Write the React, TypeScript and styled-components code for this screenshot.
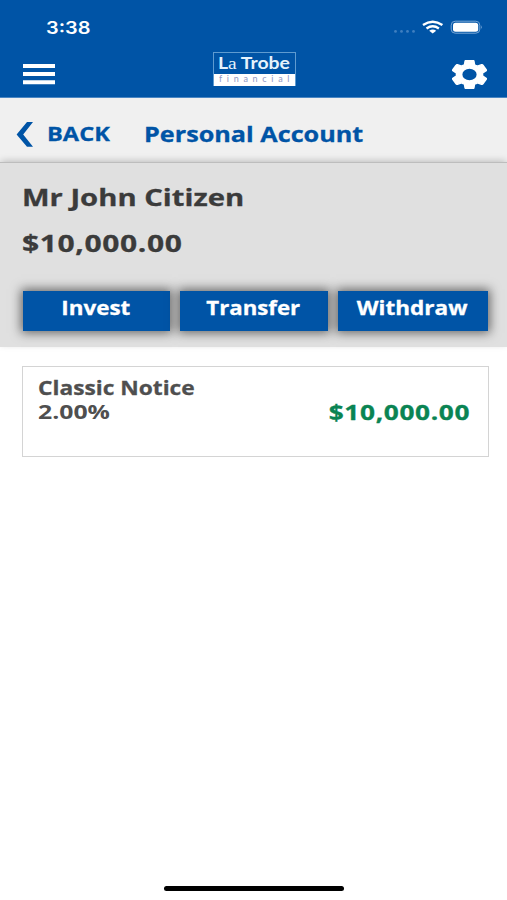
import React from "react";
import styled, { createGlobalStyle } from "styled-components";

const BLUE = "#0054a6";

const GlobalStyle = createGlobalStyle`
  * { box-sizing: border-box; }
  body { margin: 0; background: #fff; font-family: "Open Sans", "Noto Sans", sans-serif; }
`;

const Screen = styled.main`
  display: flex;
  flex-direction: column;
  width: 507px;
  height: 900px;
  background: #fff;
  overflow: hidden;
`;

const Header = styled.header`
  height: 98px;
  background: ${BLUE};
  border-bottom: 1px solid #4a86c3;
  color: #fff;
`;

const StatusBar = styled.div`
  display: flex;
  justify-content: space-between;
  height: 50px;
  padding: 17px 24px 0 46px;
`;

const StatusIcons = styled.div`
  display: flex;
  height: 20px;
`;

/* Wide lettering: glyphs are stretched horizontally from one side. */
const Wide = styled.span<{ $scale: number; $from?: string }>`
  display: inline-block;
  white-space: nowrap;
  transform: scaleX(${(p) => p.$scale});
  transform-origin: ${(p) => p.$from ?? "left"} center;
`;

const Heavy = styled(Wide)`
  -webkit-text-stroke: 0.3px currentColor;
`;

const Clock = styled.div`
  padding-top: 1px;
  font: 600 17px/20px Inter, sans-serif;
`;

const Toolbar = styled.div`
  display: grid;
  grid-template-columns: 190px 83px 1fr;
  height: 47px;
  padding: 0 20px 0 23px;
`;

const IconButton = styled.button<{ $end?: boolean }>`
  display: flex;
  justify-self: ${(p) => (p.$end ? "end" : "start")};
  align-self: center;
  padding: 1px 0 0;
  border: 0;
  background: none;
  color: inherit;
`;

const Logo = styled.div`
  display: flex;
  flex-direction: column;
  width: 83px;
  height: 34px;
  margin-top: 2px;
  border: 1px solid #5f9bd0;
`;

const LogoName = styled.div`
  height: 21px;
  padding-left: 4px;
  color: #e6f2fc;
  font: 700 17px/20px Lato, sans-serif;
`;

const LogoSerif = styled.span`
  font-family: "Liberation Serif", serif;
  font-weight: 400;
`;

const LogoTag = styled.div`
  height: 12px;
  flex: none;
  padding-left: 5px;
  background: #fff;
  color: #8f97c4;
  font: 400 9px/10px Lato, sans-serif;
  letter-spacing: 4.7px;
  white-space: nowrap;
`;

const NavBar = styled.nav`
  display: flex;
  height: 64px;
  padding: 0 16px;
  background: #f0f0f0;
  color: ${BLUE};
`;

const BackLink = styled.div`
  display: flex;
  width: 128px;
  font: 700 20px/30px "Open Sans", sans-serif;

  svg { margin: 23px 13px 0 0; }
  span { margin-top: 21px; }
`;

const Title = styled.h1`
  margin: 20px 0 0;
  font: 700 21px/32px "Open Sans", sans-serif;
`;

const Summary = styled.section`
  height: 185px;
  padding: 16px 19px 0 22px;
  background: #e0e0e0;
  border-top: 1px solid #bdbdbd;
  box-shadow: 0 -2px 7px -1px rgba(0, 0, 0, 0.22);
  color: #3b3b3b;
`;

const Holder = styled.h2`
  margin: 0;
  font: 700 24px/36px "Open Sans", sans-serif;
`;

const Balance = styled.div`
  margin-top: 10px;
  font: 700 24px/36px "Open Sans", sans-serif;
  letter-spacing: 0.5px;
`;

const Actions = styled.div`
  display: grid;
  grid-template-columns: 147px 148px 150px;
  gap: 10px;
  margin: 29.6px 0 0 0.8px;
`;

const ActionButton = styled.button`
  height: 40.5px;
  padding: 0 2px 6px 0;
  border: 0;
  background: ${BLUE};
  box-shadow: 0 0 10px 2px rgba(0, 0, 0, 0.55);
  color: #fff;
  font: 700 20px/34px "Open Sans", sans-serif;
`;

const AccountCard = styled.article`
  display: flex;
  justify-content: space-between;
  height: 91px;
  margin: 19px 18px 0 21.5px;
  padding: 9px 17.5px 0 15.5px;
  border: 1.5px solid #d4d4d4;
  background: #fff;
`;

const Product = styled.div`
  color: #4f4f4f;
  font: 700 20px/24px "Open Sans", sans-serif;
`;

const Amount = styled.div`
  margin-top: 21px;
  color: #0a8453;
  font: 700 21px/30px "Open Sans", sans-serif;
  letter-spacing: 0.5px;
`;

const HomeIndicator = styled.div`
  width: 180px;
  height: 5px;
  margin: auto auto 9px 164px;
  border-radius: 3px;
  background: #000;
`;

const MenuIcon = () => (
  <svg width="32" height="22" viewBox="0 0 32 22">
    <path d="M0 3h32M0 11h32M0 19.2h32" stroke="#fff" strokeWidth="4" />
  </svg>
);

const GearIcon = () => (
  <svg width="35" height="29" viewBox="2.3 2.1 19.4 19.8" preserveAspectRatio="none">
    <path
      fill="#fff"
      stroke="#fff"
      strokeWidth="0.9"
      strokeLinejoin="round"
      d="M19.14 12.94c.04-.3.06-.61.06-.94s-.02-.64-.07-.94l2.03-1.58a.49.49 0 0 0 .12-.61l-1.92-3.32a.49.49 0 0 0-.59-.22l-2.39.96a7 7 0 0 0-1.62-.94l-.36-2.54a.48.48 0 0 0-.48-.41h-3.84a.48.48 0 0 0-.47.41l-.36 2.54c-.59.24-1.13.57-1.62.94l-2.39-.96a.48.48 0 0 0-.59.22L2.74 8.87a.48.48 0 0 0 .12.61l2.03 1.58c-.05.3-.09.63-.09.94s.02.64.07.94l-2.03 1.58a.49.49 0 0 0-.12.61l1.92 3.32c.12.22.37.29.59.22l2.39-.96c.5.38 1.03.7 1.62.94l.36 2.54c.05.24.24.41.48.41h3.84c.24 0 .44-.17.47-.41l.36-2.54a6.7 6.7 0 0 0 1.62-.94l2.39.96c.22.08.47 0 .59-.22l1.92-3.32a.48.48 0 0 0-.12-.61zM12 16.4a4.4 4.4 0 1 1 0-8.8 4.4 4.4 0 0 1 0 8.8z"
    />
  </svg>
);

const SignalIcon = () => (
  <svg width="90" height="20" viewBox="0 0 90 20">
    <g fill="#3f7fc0">
      <circle cx="2.5" cy="14.4" r="1.4" />
      <circle cx="8.5" cy="14.4" r="1.4" />
      <circle cx="14.5" cy="14.4" r="1.4" />
      <circle cx="20.5" cy="14.4" r="1.4" />
    </g>
    <g fill="none" stroke="#fff" strokeWidth="2.4">
      <path d="M30 8q9.7-6.6 19.4 0" />
      <path d="M33.5 11.4q6.2-4.2 12.4 0" />
    </g>
    <path d="M36.2 13.7q3.5-2.4 7 0L39.7 16.6z" fill="#fff" />
    <rect x="58.2" y="4.2" width="28.6" height="12" rx="4" fill="none" stroke="#79a7d7" strokeWidth="1" />
    <rect x="60" y="5.8" width="25.2" height="9" rx="2.5" fill="#fff" />
    <path d="M88.1 8.3q1.8 1.9 0 3.8z" fill="#79a7d7" />
  </svg>
);

const BackIcon = () => (
  <svg width="18" height="27" viewBox="0 0 18 27">
    <path d="M11 1h6L7.2 13.4l9.8 12.4h-6L.6 13.4z" fill={BLUE} />
  </svg>
);

export default function App() {
  return (
    <>
      <GlobalStyle />
      <Screen>
        <Header>
          <StatusBar>
            <Clock><Wide $scale={1.17}>3:38</Wide></Clock>
            <StatusIcons><SignalIcon /></StatusIcons>
          </StatusBar>
          <Toolbar>
            <IconButton aria-label="Menu"><MenuIcon /></IconButton>
            <Logo>
              <LogoName><Wide $scale={1.14}>L<LogoSerif>a</LogoSerif> Trobe</Wide></LogoName>
              <LogoTag>financial</LogoTag>
            </Logo>
            <IconButton $end aria-label="Settings"><GearIcon /></IconButton>
          </Toolbar>
        </Header>
        <NavBar>
          <BackLink>
            <BackIcon />
            <Heavy $scale={1.18}>BACK</Heavy>
          </BackLink>
          <Title><Heavy $scale={1.2}>Personal Account</Heavy></Title>
        </NavBar>
        <Summary>
          <Holder><Heavy $scale={1.218}>Mr John Citizen</Heavy></Holder>
          <Balance><Heavy $scale={1.25}>$10,000.00</Heavy></Balance>
          <Actions>
            <ActionButton><Heavy $scale={1.12} $from="center">Invest</Heavy></ActionButton>
            <ActionButton><Heavy $scale={1.11} $from="center">Transfer</Heavy></ActionButton>
            <ActionButton><Heavy $scale={1.127} $from="center">Withdraw</Heavy></ActionButton>
          </Actions>
        </Summary>
        <AccountCard>
          <Product>
            <div><Heavy $scale={1.136}>Classic Notice</Heavy></div>
            <div><Wide $scale={1.24}>2.00%</Wide></div>
          </Product>
          <Amount><Heavy $scale={1.25} $from="right">$10,000.00</Heavy></Amount>
        </AccountCard>
        <HomeIndicator />
      </Screen>
    </>
  );
}
